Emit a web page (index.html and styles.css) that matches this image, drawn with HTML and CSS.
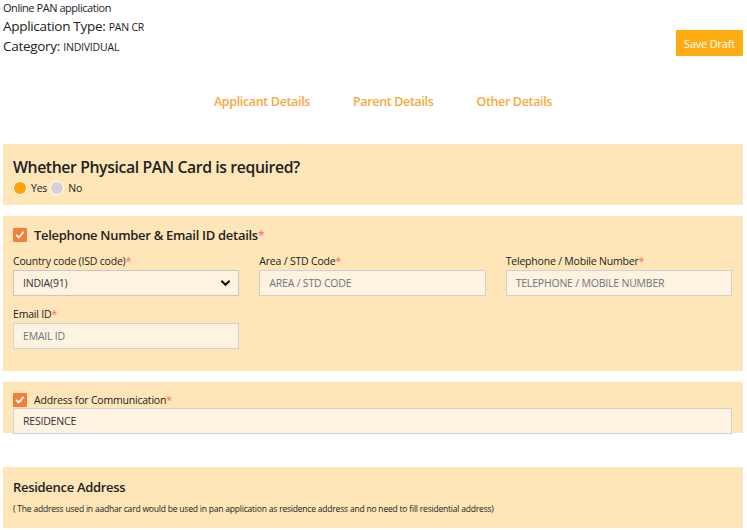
FILE: index.html
```html
<!DOCTYPE html>
<html>
<head>
<meta charset="utf-8">
<link rel="stylesheet" href="styles.css">
</head>
<body>
<div class="page">
  <header class="top">
    <div class="meta">
      <div class="m1">Online PAN application</div>
      <div class="m2">Application Type: <span class="val">PAN CR</span></div>
      <div class="m3">Category: <span class="val">INDIVIDUAL</span></div>
    </div>
    <button class="save">Save Draft</button>
  </header>

  <nav class="tabs">
    <span class="tab">Applicant Details</span>
    <span class="tab">Parent Details</span>
    <span class="tab">Other Details</span>
  </nav>

  <section class="card card-pan">
    <h2 class="q">Whether Physical PAN Card is required?</h2>
    <div class="radios">
      <span class="radio on"></span><span class="rlabel">Yes</span>
      <span class="radio off"></span><span class="rlabel">No</span>
    </div>
  </section>

  <section class="card card-tel">
    <div class="chkrow">
      <span class="chk"><svg viewBox="0 0 14 14" width="14" height="14"><path d="M3.6 7.4 L5.8 9.5 L10.2 4.4" fill="none" stroke="#fff" stroke-width="1.8" stroke-linecap="round" stroke-linejoin="round"/></svg></span>
      <span class="chktitle">Telephone Number &amp; Email ID details<span class="req">*</span></span>
    </div>
    <div class="grid">
      <div class="field">
        <label>Country code (ISD code)<span class="req">*</span></label>
        <div class="input select">INDIA(91)<svg class="caret" viewBox="0 0 12 8" width="11" height="8"><path d="M1.5 1.5 L6 6 L10.5 1.5" fill="none" stroke="#111" stroke-width="2.2"/></svg></div>
      </div>
      <div class="field">
        <label>Area / STD Code<span class="req">*</span></label>
        <div class="input ph">AREA / STD CODE</div>
      </div>
      <div class="field">
        <label>Telephone / Mobile Number<span class="req">*</span></label>
        <div class="input ph">TELEPHONE / MOBILE NUMBER</div>
      </div>
      <div class="field">
        <label>Email ID<span class="req">*</span></label>
        <div class="input ph">EMAIL ID</div>
      </div>
    </div>
  </section>

  <section class="card card-addr">
    <div class="chkrow">
      <span class="chk"><svg viewBox="0 0 14 14" width="14" height="14"><path d="M3.6 7.4 L5.8 9.5 L10.2 4.4" fill="none" stroke="#fff" stroke-width="1.8" stroke-linecap="round" stroke-linejoin="round"/></svg></span>
      <span class="chklabel">Address for Communication<span class="req">*</span></span>
    </div>
    <div class="input full">RESIDENCE</div>
  </section>

  <section class="card card-res">
    <h3 class="rtitle">Residence Address</h3>
    <p class="note">( The address used in aadhar card would be used in pan application as residence address and no need to fill residential address)</p>
  </section>
</div>
</body>
</html>
```

FILE: styles.css
```css
* { box-sizing: border-box; }
html, body { margin: 0; padding: 0; background: #fff; }
body {
  font-family: "Open Sans", "Noto Sans", "DejaVu Sans", sans-serif;
  color: #222;
}
.page { padding: 0 4px 0 3px; }

.top {
  display: flex;
  justify-content: space-between;
  align-items: flex-start;
}
.m1 { font-size: 11px; line-height: 16px; letter-spacing: -0.45px; }
.m2, .m3 { font-size: 13.5px; line-height: 20px; letter-spacing: -0.3px; }
.m3 { margin-top: -1px; }
.val { font-size: 10.5px; letter-spacing: -0.2px; }
.save {
  margin-top: 30px;
  background: #ffad14;
  color: #fff;
  border: 0;
  font-family: inherit;
  font-size: 11px;
  letter-spacing: -0.2px;
  height: 26px;
  width: 67px;
  padding: 0;
}

.tabs {
  display: flex;
  justify-content: center;
  gap: 43px;
  padding: 37px 0 0 0;
  margin-left: 20px;
}
.tab {
  color: #f7a93a;
  font-size: 12.5px;
  font-weight: 600;
  letter-spacing: -0.35px;
  line-height: 16px;
}

.card {
  background: #fee6b9;
  padding: 0 11px 0 10px;
}
.card-pan { margin-top: 34px; height: 61px; padding-top: 12px; }
.q {
  margin: 0;
  font-size: 15.8px;
  font-weight: 600;
  letter-spacing: -0.4px;
  line-height: 22px;
  color: #222;
}
.radios { display: flex; align-items: center; margin-top: 3px; height: 14px; }
.radio {
  flex: 0 0 14px;
  width: 14px; height: 14px; border-radius: 50%;
  border: 1px solid #fff;
  display: block;
}
.radio.on { background: #ffa300; }
.radio.off { background: #d3d3d3; margin-left: 3px; }
.rlabel { font-size: 10.5px; margin-left: 4px; letter-spacing: -0.2px; }

.card-tel { margin-top: 11px; height: 155px; padding-top: 11px; }
.chkrow { display: flex; align-items: center; height: 16px; }
.chk {
  flex: 0 0 14px;
  width: 14px; height: 14px; background: #f2803a;
  display: inline-flex; border-radius: 1px;
}
.chktitle {
  margin-left: 7px;
  font-size: 13px;
  font-weight: 600;
  letter-spacing: -0.3px;
  color: #222;
}
.req { color: #f26b6b; font-weight: 400; }
.grid {
  display: grid;
  grid-template-columns: 1fr 1fr 1fr;
  column-gap: 20px;
  row-gap: 11px;
  margin-top: 11px;
}
.field label {
  display: block;
  font-size: 10.5px;
  letter-spacing: -0.2px;
  line-height: 15px;
  margin-bottom: 1px;
  color: #222;
}
.input {
  height: 26px;
  background: #fef2e0;
  border: 1px solid #cfd3d8;
  font-size: 10.5px;
  letter-spacing: -0.2px;
  line-height: 24px;
  padding: 0 9px;
  color: #333;
  display: flex;
  align-items: center;
}
.input.ph { color: #6c757d; }
.select { justify-content: space-between; border-color: #c8c8c8; }
.caret { margin-right: -2px; }

.card-addr { margin-top: 11px; height: 51px; padding-top: 10px; }
.chklabel { margin-left: 7px; font-size: 10.5px; letter-spacing: -0.2px; }

.card-res { margin-top: 34px; height: 61px; padding-top: 11px; }
.rtitle {
  margin: 0;
  font-size: 13px;
  font-weight: 600;
  letter-spacing: -0.3px;
  line-height: 18px;
}
.note {
  margin: 7px 0 0 0;
  font-size: 8.5px;
  letter-spacing: -0.2px;
  line-height: 12px;
}
```
